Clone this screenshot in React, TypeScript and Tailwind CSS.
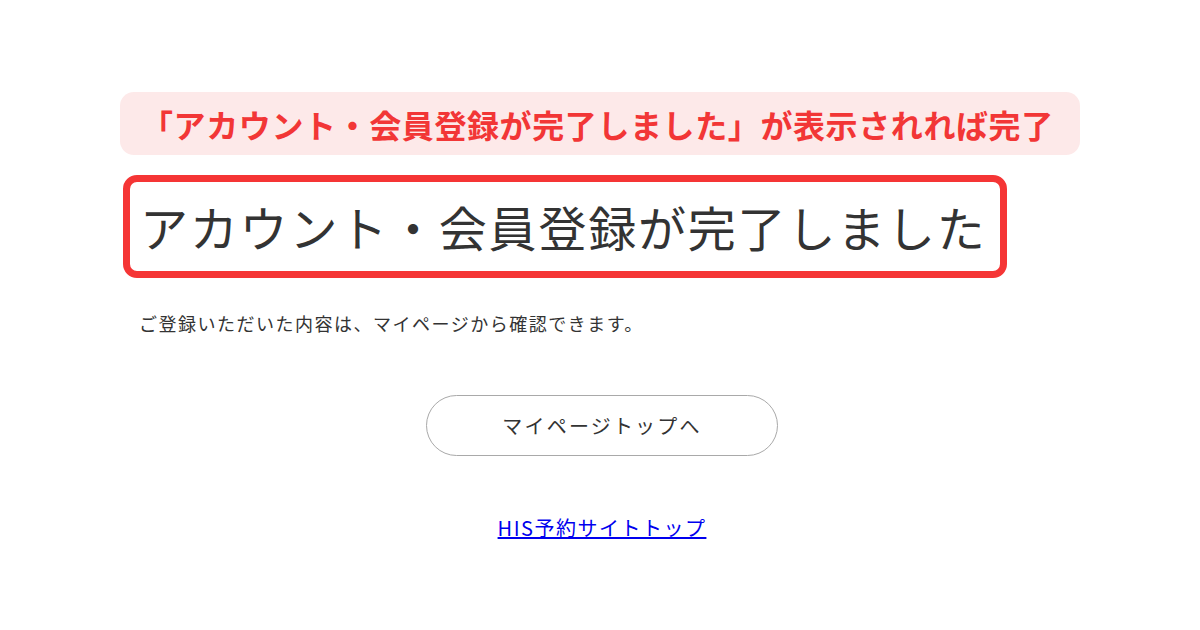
import React from 'react';

const App: React.FC = () => {
  return (
    <div className="w-[1200px] h-[630px] bg-white overflow-hidden font-['Noto_Sans_CJK_JP',sans-serif]">
      <div className="pt-[92px] pl-[120px]">
        <div className="w-[960px] h-[63px] rounded-[14px] bg-[#fde9e9] flex items-center pl-[21px]">
          <p className="text-[32px] font-bold leading-none text-[#f23636] tracking-[0.6px]">
            「アカウント・会員登録が完了しました」が表示されれば完了
          </p>
        </div>

        <div className="mt-[20px] ml-[3px] w-[884px] h-[103px] rounded-[14px] border-[7px] border-[#f53535] flex items-center pl-[10px]">
          <h1 className="text-[48px] leading-none text-[#333333] tracking-[1.8px] pb-[2px]">
            アカウント・会員登録が完了しました
          </h1>
        </div>

        <p className="mt-[36px] ml-[19px] text-[18px] leading-none text-[#333333] tracking-[1.5px]">
          ご登録いただいた内容は、マイページから確認できます。
        </p>
      </div>

      <div className="flex flex-col items-center">
        <button className="mt-[63px] ml-[4px] w-[352px] h-[61px] rounded-full border border-[#a9a9a9] bg-white text-[20px] text-[#333333] tracking-[2.2px] flex items-center justify-center">
          マイページトップへ
        </button>
        <a href="#" className="mt-[62px] ml-[4px] text-[20px] leading-none text-[#0000ee] underline tracking-[1.5px]">
          HIS予約サイトトップ
        </a>
      </div>
    </div>
  );
};

export default App;
